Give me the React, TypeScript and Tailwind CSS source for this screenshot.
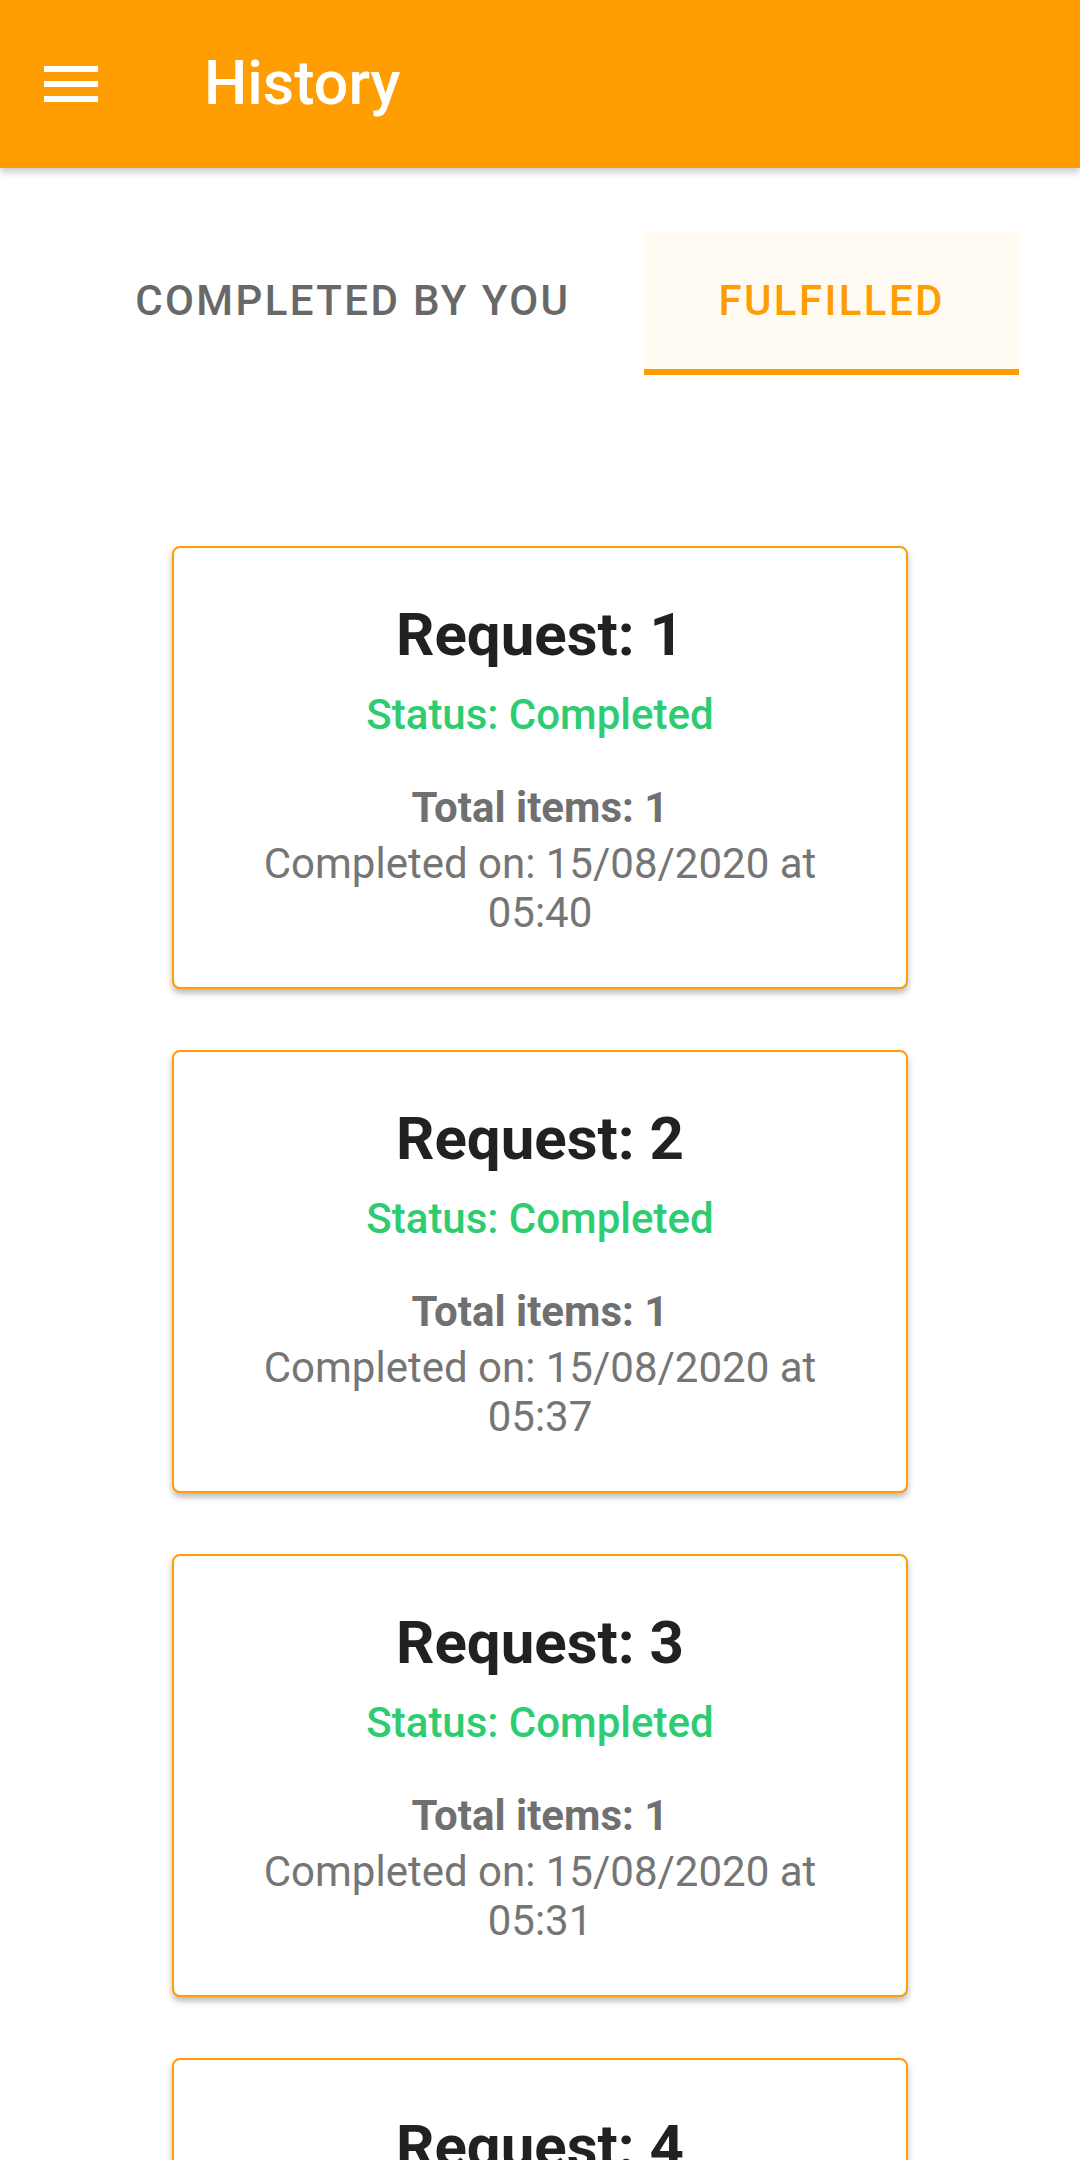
import React from 'react'

const requests = [
    { id: 1, time: '05:40' },
    { id: 2, time: '05:37' },
    { id: 3, time: '05:31' },
    { id: 4, time: '05:28' },
]

const MenuIcon = () => (
    <svg width="72" height="72" viewBox="0 0 24 24" fill="#ffffff">
        <path d="M3 18h18v-2H3v2zm0-5h18v-2H3v2zm0-7v2h18V6H3z" />
    </svg>
)

const RequestCard = ({ id, time }: { id: number; time: string }) => {
    return (
        <div className="w-[736px] h-[443px] shrink-0 border-2 border-[#ff9e02] rounded-lg bg-white shadow-[0_4px_6px_rgba(0,0,0,0.28)] pt-[52px] px-[68px] text-center">
            <h2 className="text-[60px] leading-[70px] font-bold text-[#212121]">
                Request: {id}
            </h2>
            <p className="mt-[20px] text-[42px] leading-[49px] font-medium text-[#2ecc71]">
                Status: Completed
            </p>
            <p className="mt-[44px] text-[42px] leading-[49px] font-bold text-[#707070]">
                Total items: 1
            </p>
            <p className="mt-[7px] text-[42px] leading-[49px] text-[#757575]">
                Completed on: 15/08/2020 at {time}
            </p>
        </div>
    )
}

const App = () => {
    return (
        <div className="h-[2160px] overflow-hidden bg-white font-['Roboto',sans-serif]">
            <header className="relative z-10 h-[168px] bg-[#ff9e02] flex items-center shadow-[0_4px_8px_rgba(0,0,0,0.22)]">
                <div className="ml-[35px]">
                    <MenuIcon />
                </div>
                <h1 className="ml-[97px] text-[61px] font-medium text-white">
                    History
                </h1>
            </header>
            <div className="flex justify-center pt-[63px]">
                <div className="h-[144px] px-[74px] flex items-center border-b-[6px] border-transparent text-[42px] font-medium tracking-[2.4px] text-[#686868]">
                    COMPLETED BY YOU
                </div>
                <div className="h-[144px] px-[74px] flex items-center border-b-[6px] border-[#ff9e02] bg-[#fffbf3] text-[42px] font-medium tracking-[2.4px] text-[#ff9e02]">
                    FULFILLED
                </div>
            </div>
            <div className="mt-[171px] flex flex-col items-center gap-[61px]">
                {requests.map((r) => (
                    <RequestCard key={r.id} id={r.id} time={r.time} />
                ))}
            </div>
        </div>
    )
}

export default App
